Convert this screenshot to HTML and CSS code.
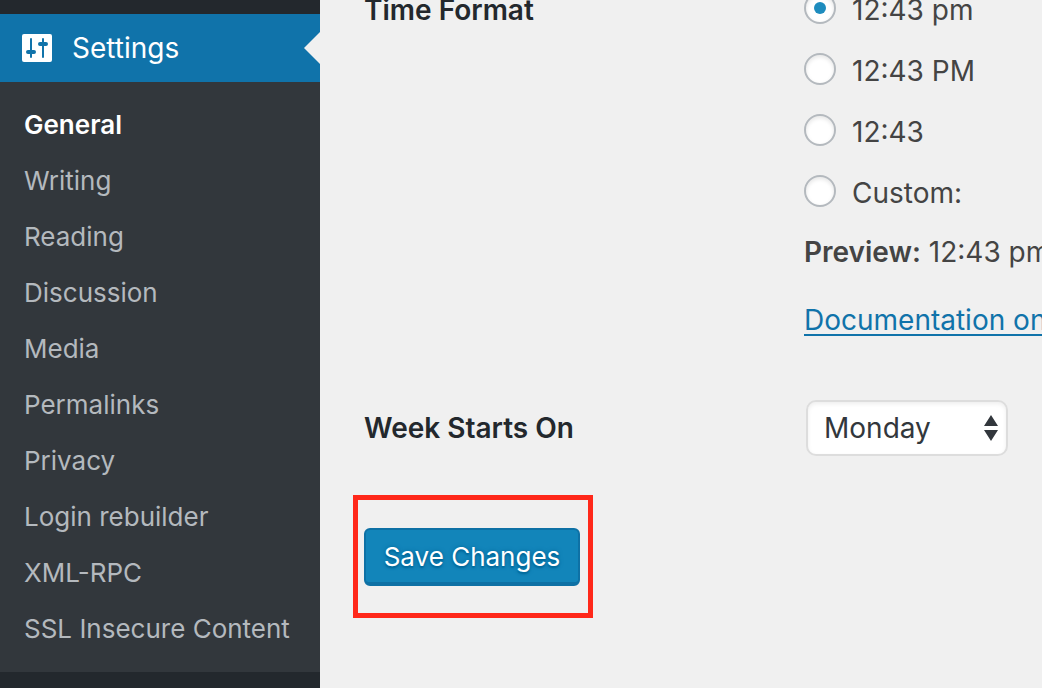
FILE: index.html
```html
<!DOCTYPE html>
<html lang="en">
<head>
  <meta charset="UTF-8">
  <meta name="viewport" content="width=device-width, initial-scale=1.0">
  <title>Settings</title>
  <link rel="stylesheet" href="styles.css">
</head>
<body>
  <nav class="sidebar">
    <a class="menu-top" href="#">
      <svg class="menu-icon" viewBox="0 0 30 28" aria-hidden="true">
        <rect width="30" height="28" rx="2" fill="#fff"/>
        <g stroke="#1073aa" stroke-width="2" stroke-linecap="round">
          <path d="M9 5v18M21 5v18"/>
          <path d="M6 18h6M18 10h6" stroke-width="4"/>
        </g>
      </svg>
      Settings
    </a>
    <ul class="submenu">
      <li><a class="current" href="#">General</a></li>
      <li><a href="#">Writing</a></li>
      <li><a href="#">Reading</a></li>
      <li><a href="#">Discussion</a></li>
      <li><a href="#">Media</a></li>
      <li><a href="#">Permalinks</a></li>
      <li><a href="#">Privacy</a></li>
      <li><a href="#">Login rebuilder</a></li>
      <li><a href="#">XML-RPC</a></li>
      <li><a href="#">SSL Insecure Content</a></li>
    </ul>
  </nav>

  <main>
    <form>
      <div class="form-row time-row">
        <div class="row-title" id="time-title">Time Format</div>
        <div role="radiogroup" aria-labelledby="time-title">
          <label class="option"><input type="radio" name="time_format" checked><span>12:43 pm</span></label>
          <label class="option"><input type="radio" name="time_format"><span>12:43 PM</span></label>
          <label class="option"><input type="radio" name="time_format"><span>12:43</span></label>
          <label class="option"><input type="radio" name="time_format"><span>Custom:</span></label>
          <p class="preview"><strong>Preview:</strong> 12:43 pm</p>
          <p class="docs"><a href="#">Documentation on&nbsp;</a></p>
        </div>
      </div>

      <div class="form-row week-row">
        <label class="row-title" for="week">Week Starts On</label>
        <div class="select-wrap">
          <select id="week">
            <option>Monday</option>
          </select>
          <svg class="select-arrows" viewBox="0 0 14 26" aria-hidden="true">
            <path d="M7 0l7 11H0zM7 26l7-11H0z" fill="#32373c"/>
          </svg>
        </div>
      </div>

      <div class="submit">
        <button type="button">Save Changes</button>
      </div>
    </form>
  </main>
</body>
</html>
```

FILE: styles.css
```css
* {
  box-sizing: border-box;
}
body {
  display: flex;
  margin: 0;
  min-height: 100vh;
  overflow: hidden;
  background: #f0f0f0;
  color: #444;
  font-family: Inter, "Liberation Sans", sans-serif;
  font-size: 28px;
  line-height: 40px;
}

/* Sidebar */
.sidebar {
  flex: 0 0 320px;
  padding-top: 14px;
  background: #23282d;
}
.menu-top {
  position: relative;
  display: flex;
  align-items: center;
  gap: 20px;
  height: 68px;
  padding-left: 22px;
  background: #1073aa;
  color: #fff;
  text-decoration: none;
}
.menu-top::after {
  content: "";
  position: absolute;
  right: 0;
  top: 18px;
  border: 16px solid transparent;
  border-left: 0;
  border-right-color: #f0f0f0;
}
.menu-icon {
  width: 30px;
  height: 28px;
}
.submenu {
  margin: 0;
  padding: 15px 0;
  list-style: none;
  background: #32373c;
}
.submenu a {
  display: block;
  padding: 0 24px;
  color: #b4b9be;
  font-size: 26px;
  line-height: 56px;
  text-decoration: none;
  white-space: nowrap;
}
.submenu .current {
  color: #fff;
  font-weight: 600;
}

/* Settings form */
main {
  flex: 1;
  min-width: 0;
  padding-left: 33px;
}
.form-row {
  display: grid;
  grid-template-columns: 440px 1fr;
  padding-left: 11px;
  white-space: nowrap;
}
.time-row {
  margin-top: -23px;
}
.row-title {
  color: #23282d;
  font-weight: 600;
}
.time-row .row-title {
  padding-top: 13px;
}
.option {
  display: flex;
  align-items: center;
  gap: 16px;
  height: 61px;
}
.option span {
  padding-top: 4px;
}
.option input {
  display: grid;
  place-items: center;
  appearance: none;
  width: 32px;
  height: 32px;
  margin: 0;
  border: 2px solid #b4b9be;
  border-radius: 50%;
  background: #fff;
  box-shadow: inset 0 2px 4px rgba(0, 0, 0, 0.1);
}
.option input:checked::before {
  content: "";
  width: 12px;
  height: 12px;
  border-radius: 50%;
  background: #1e8cbe;
}
p {
  margin: 0;
}
.preview {
  padding-top: 11px;
}
.preview strong {
  font-weight: 600;
}
.docs {
  padding-top: 28px;
}
.docs a {
  color: #1073aa;
  text-decoration-thickness: 2px;
  text-underline-offset: 4px;
}
.week-row {
  align-items: center;
  margin-top: 60px;
}
.select-wrap {
  position: relative;
  width: 204px;
  padding-left: 2px;
}
select {
  appearance: none;
  display: block;
  width: 100%;
  height: 56px;
  padding: 0 16px;
  border: 2px solid #ddd;
  border-radius: 10px;
  background: #fff;
  box-shadow: inset 0 2px 4px rgba(0, 0, 0, 0.07);
  color: #32373c;
  font: inherit;
}
.select-arrows {
  position: absolute;
  top: 15px;
  right: 10px;
  width: 14px;
  height: 26px;
  pointer-events: none;
}
.submit {
  width: 240px;
  margin-top: 39px;
  padding: 28px 6px 27px;
  border: 5px solid #ff281a;
}
button {
  display: block;
  width: 216px;
  height: 58px;
  padding: 2px 0 0;
  border: 2px solid #0e71a5;
  border-bottom-width: 4px;
  border-radius: 6px;
  background: #1285ba;
  color: #fff;
  font: inherit;
  font-size: 26px;
  text-shadow: 0 0 4px #006799, 0 2px 2px #006799;
  white-space: nowrap;
}
```
